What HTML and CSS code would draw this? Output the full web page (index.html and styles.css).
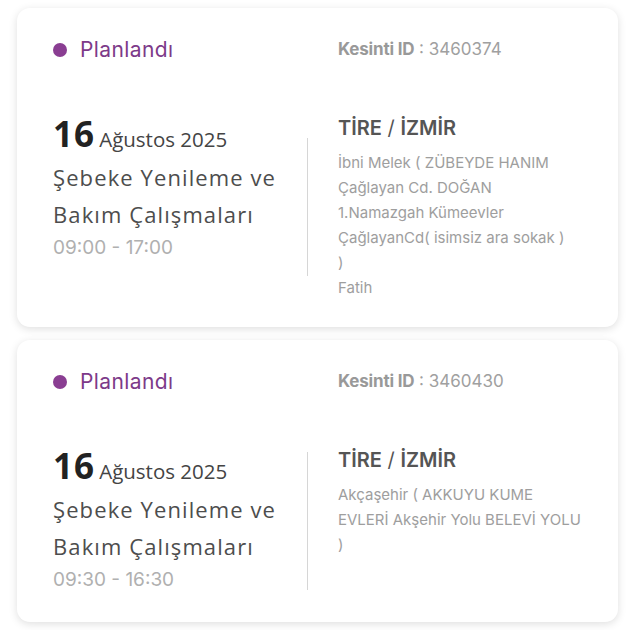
FILE: index.html
```html
<!DOCTYPE html>
<html lang="tr">
<head>
<meta charset="utf-8">
<link rel="stylesheet" href="styles.css">
</head>
<body>
<div class="list">
  <div class="card">
    <div class="status"><span class="dot"></span><span class="status-text">Planlandı</span></div>
    <div class="outage-id"><b>Kesinti ID</b> : 3460374</div>
    <div class="when">
      <div class="date"><span class="day">16</span> <span class="month">Ağustos 2025</span></div>
      <div class="title">Şebeke Yenileme ve Bakım Çalışmaları</div>
      <div class="time">09:00 - 17:00</div>
    </div>
    <div class="divider"></div>
    <div class="where">
      <div class="place"><b>TİRE</b> / <b>İZMİR</b></div>
      <div class="addr">İbni Melek ( ZÜBEYDE HANIM Çağlayan Cd. DOĞAN 1.Namazgah Kümeevler ÇağlayanCd( isimsiz ara sokak )<br>)</div>
      <div class="addr">Fatih</div>
    </div>
  </div>
  <div class="card">
    <div class="status"><span class="dot"></span><span class="status-text">Planlandı</span></div>
    <div class="outage-id"><b>Kesinti ID</b> : 3460430</div>
    <div class="when">
      <div class="date"><span class="day">16</span> <span class="month">Ağustos 2025</span></div>
      <div class="title">Şebeke Yenileme ve Bakım Çalışmaları</div>
      <div class="time">09:30 - 16:30</div>
    </div>
    <div class="divider"></div>
    <div class="where">
      <div class="place"><b>TİRE</b> / <b>İZMİR</b></div>
      <div class="addr">Akçaşehir ( AKKUYU KUME EVLERİ Akşehir Yolu BELEVİ YOLU )</div>
    </div>
  </div>
</div>
</body>
</html>
```

FILE: styles.css
```css
* { box-sizing: border-box; }
html, body { margin: 0; padding: 0; background: #fff; }
body { font-family: "Inter", "Liberation Sans", sans-serif; }

.list {
  display: flex;
  flex-direction: column;
  gap: 13px;
  padding: 8px 9px 8px 17px;
}

.card {
  background: #fff;
  border-radius: 13px;
  box-shadow: 0 2px 9px rgba(0, 0, 0, 0.13);
  padding: 30px 36px 27px 36px;
  display: grid;
  grid-template-columns: 254px 1px 1fr;
  grid-template-rows: auto auto;
  row-gap: 52px;
}

.status {
  grid-column: 1;
  display: flex;
  align-items: center;
  gap: 13px;
  color: #7d3a89;
  font-size: 21px;
  letter-spacing: 0.4px;
  line-height: 24px;
}
.dot {
  width: 14px;
  height: 14px;
  border-radius: 50%;
  background: #8a3e92;
}

.outage-id {
  grid-column: 3;
  padding-left: 30px;
  color: #a0a0a0;
  font-size: 17px;
  line-height: 22px;
}
.outage-id b { font-weight: 700; color: #999; letter-spacing: -0.2px; }

.when {
  grid-column: 1;
  grid-row: 2;
  font-family: "Open Sans", "Noto Sans", sans-serif;
}
.date { line-height: 36px; padding-top: 2px; }
.day { font-size: 35px; font-weight: 700; color: #222; letter-spacing: 1px; }
.month { font-size: 20.5px; color: #444; }
.title {
  font-size: 22px;
  letter-spacing: 1.1px;
  line-height: 37px;
  color: #4d4d4d;
}
.time {
  font-family: "Inter", sans-serif;
  font-size: 19px;
  line-height: 30px;
  color: #b0b0b0;
}

.divider {
  grid-column: 2;
  grid-row: 2;
  align-self: center;
  height: 138px;
  background: #d6d6d6;
}

.where {
  grid-column: 3;
  grid-row: 2;
  padding-left: 30px;
}
.place {
  font-size: 20px;
  line-height: 28px;
  color: #555;
  margin-bottom: 8px;
}
.place b { font-weight: 600; }
.addr {
  font-size: 15px;
  line-height: 25px;
  color: #9e9e9e;
}
```
